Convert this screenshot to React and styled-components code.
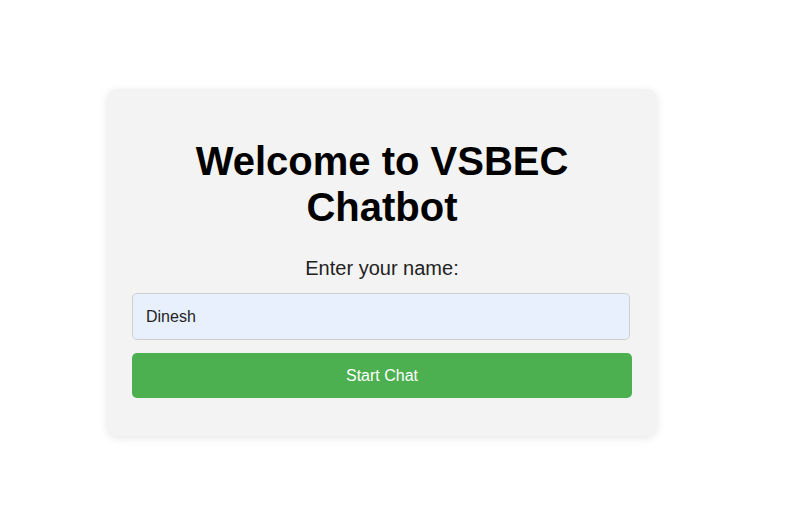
import { useState } from 'react'
import styled, { createGlobalStyle } from 'styled-components'

const GlobalStyle = createGlobalStyle`
    html, body {
      margin: 0;
      padding: 0;
      background: #ffffff;
      font-family: "Liberation Sans", Arial, sans-serif;
    }
`

const Page = styled.div`
    min-height: 532px;
    display: flex;
    align-items: flex-start;
    padding: 89px 0 0 107px;
    box-sizing: border-box;
`

const Card = styled.div`
    width: 550px;
    box-sizing: border-box;
    padding: 25px 25px 38px;
    background: #f3f3f3;
    border-radius: 10px;
    box-shadow: 0 2px 8px rgba(0, 0, 0, 0.1);
    display: flex;
    flex-direction: column;
    align-items: center;
`

const Title = styled.h1`
    margin: 24px 0 27px;
    width: 420px;
    font-size: 40px;
    font-weight: bold;
    line-height: 46px;
    text-align: center;
    color: #000;
`

const Label = styled.label`
    font-size: 20px;
    line-height: 23px;
    color: #222;
    margin-bottom: 13px;
`

const Input = styled.input`
    width: 498px;
    height: 47px;
    box-sizing: border-box;
    padding: 0 13px;
    border: 1px solid #cfcfcf;
    border-radius: 5px;
    background: #e8f0fe;
    font-family: inherit;
    font-size: 16px;
    color: #222;
    outline: none;
    align-self: flex-start;
`

const Button = styled.button`
    width: 500px;
    height: 45px;
    margin-top: 13px;
    border: none;
    border-radius: 5px;
    background: #4caf50;
    color: #fff;
    font-family: inherit;
    font-size: 16px;
    cursor: pointer;
`

export default function App() {
    const [name, setName] = useState('Dinesh')

    return (
        <>
            <GlobalStyle />
            <Page>
                <Card>
                    <Title>Welcome to VSBEC Chatbot</Title>
                    <Label htmlFor="name">Enter your name:</Label>
                    <Input id="name" value={name} onChange={(e) => setName(e.target.value)} />
                    <Button>Start Chat</Button>
                </Card>
            </Page>
        </>
    )
}
